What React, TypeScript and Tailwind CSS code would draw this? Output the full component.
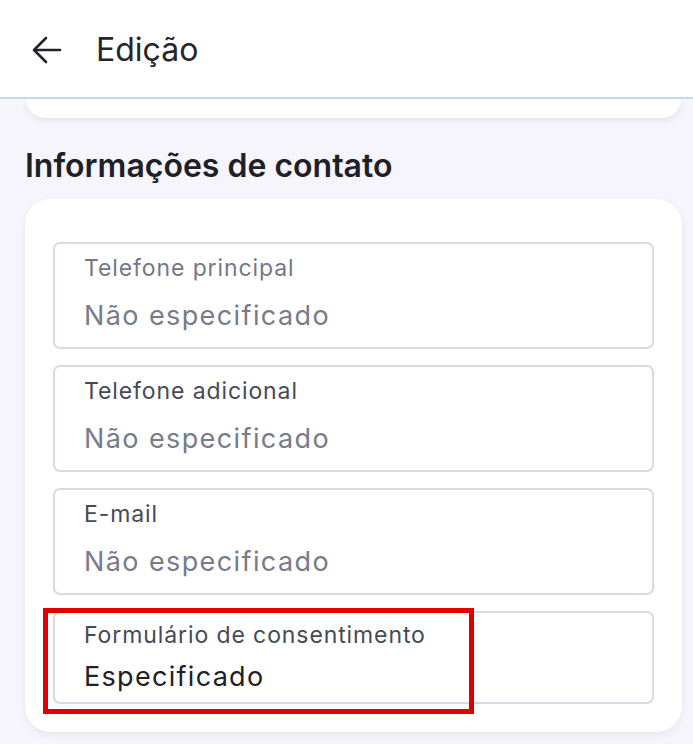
import clsx from "clsx";

interface IField {
  label: string;
  value: string;
  muted?: boolean;
}

const fields: IField[] = [
  { label: "Telefone principal", value: "Não especificado", muted: true },
  { label: "Telefone adicional", value: "Não especificado" },
  { label: "E-mail", value: "Não especificado" },
];

function Field({ label, value, muted }: IField) {
  return (
    <div className="flex flex-col h-[107px] pt-[10px] pb-[15px] pl-[29px] pr-4 border-2 border-[#d7d9e5] rounded-[7px] bg-white">
      <span
        className={clsx(
          "h-[28px] text-[23px] leading-[28px] tracking-[0.9px] whitespace-nowrap",
          muted ? "text-[#747886]" : "text-[#464a56]"
        )}
      >
        {label}
      </span>
      <span className="mt-[18px] h-[32px] text-[27px] leading-[32px] tracking-[1.4px] text-[#777b8b] whitespace-nowrap">
        {value}
      </span>
    </div>
  );
}

export default function App() {
  return (
    <div
      className="min-h-[744px] bg-[#f6f5fb] text-[#1e2027]"
      style={{ fontFamily: "Inter, 'Noto Sans', sans-serif" }}
    >
      <header className="flex items-center h-[99px] pt-[2px] bg-white border-b-2 border-[#c9d6f6]">
        <svg
          width="30"
          height="28"
          viewBox="0 0 30 28"
          fill="none"
          stroke="#222328"
          strokeWidth="2.6"
          strokeLinecap="round"
          strokeLinejoin="round"
          className="ml-[32px]"
        >
          <path d="M28 14H3" />
          <path d="M14 2 2 14l12 12" />
        </svg>
        <h1 className="ml-[34px] text-[32px] leading-[38px] text-[#25262b]">
          Edição
        </h1>
      </header>

      <div className="ml-[26px] mr-[12px] h-[19px] bg-white rounded-b-[24px] shadow-[0_3px_6px_rgba(40,40,80,0.08)]" />

      <h2 className="ml-[25px] mt-[29px] text-[32px] leading-[38px] font-semibold text-[#1e2027]">
        Informações de contato
      </h2>

      <section className="ml-[25px] mr-[11px] mt-[14px] pt-[43px] pb-[28px] px-[28px] bg-white rounded-[26px] shadow-[0_3px_8px_rgba(40,40,90,0.07)]">
        <ul className="flex flex-col gap-[16px]">
          {fields.map((field) => (
            <li key={field.label}>
              <Field {...field} />
            </li>
          ))}
          <li className="relative">
            <div className="flex flex-col h-[93px] pt-[8px] pb-[9px] pl-[29px] pr-4 border-2 border-[#d7d9e5] rounded-[7px] bg-white">
              <span className="h-[28px] text-[23px] leading-[28px] tracking-[0.9px] text-[#464a56] whitespace-nowrap">
                Formulário de consentimento
              </span>
              <span className="mt-[12px] h-[32px] text-[27px] leading-[32px] tracking-[1.3px] text-[#1e2027] whitespace-nowrap">
                Especificado
              </span>
            </div>
            <div className="absolute left-[-10px] top-[-3px] w-[431px] h-[106px] border-[5px] border-[#e00000] pointer-events-none" />
          </li>
        </ul>
      </section>
    </div>
  );
}
